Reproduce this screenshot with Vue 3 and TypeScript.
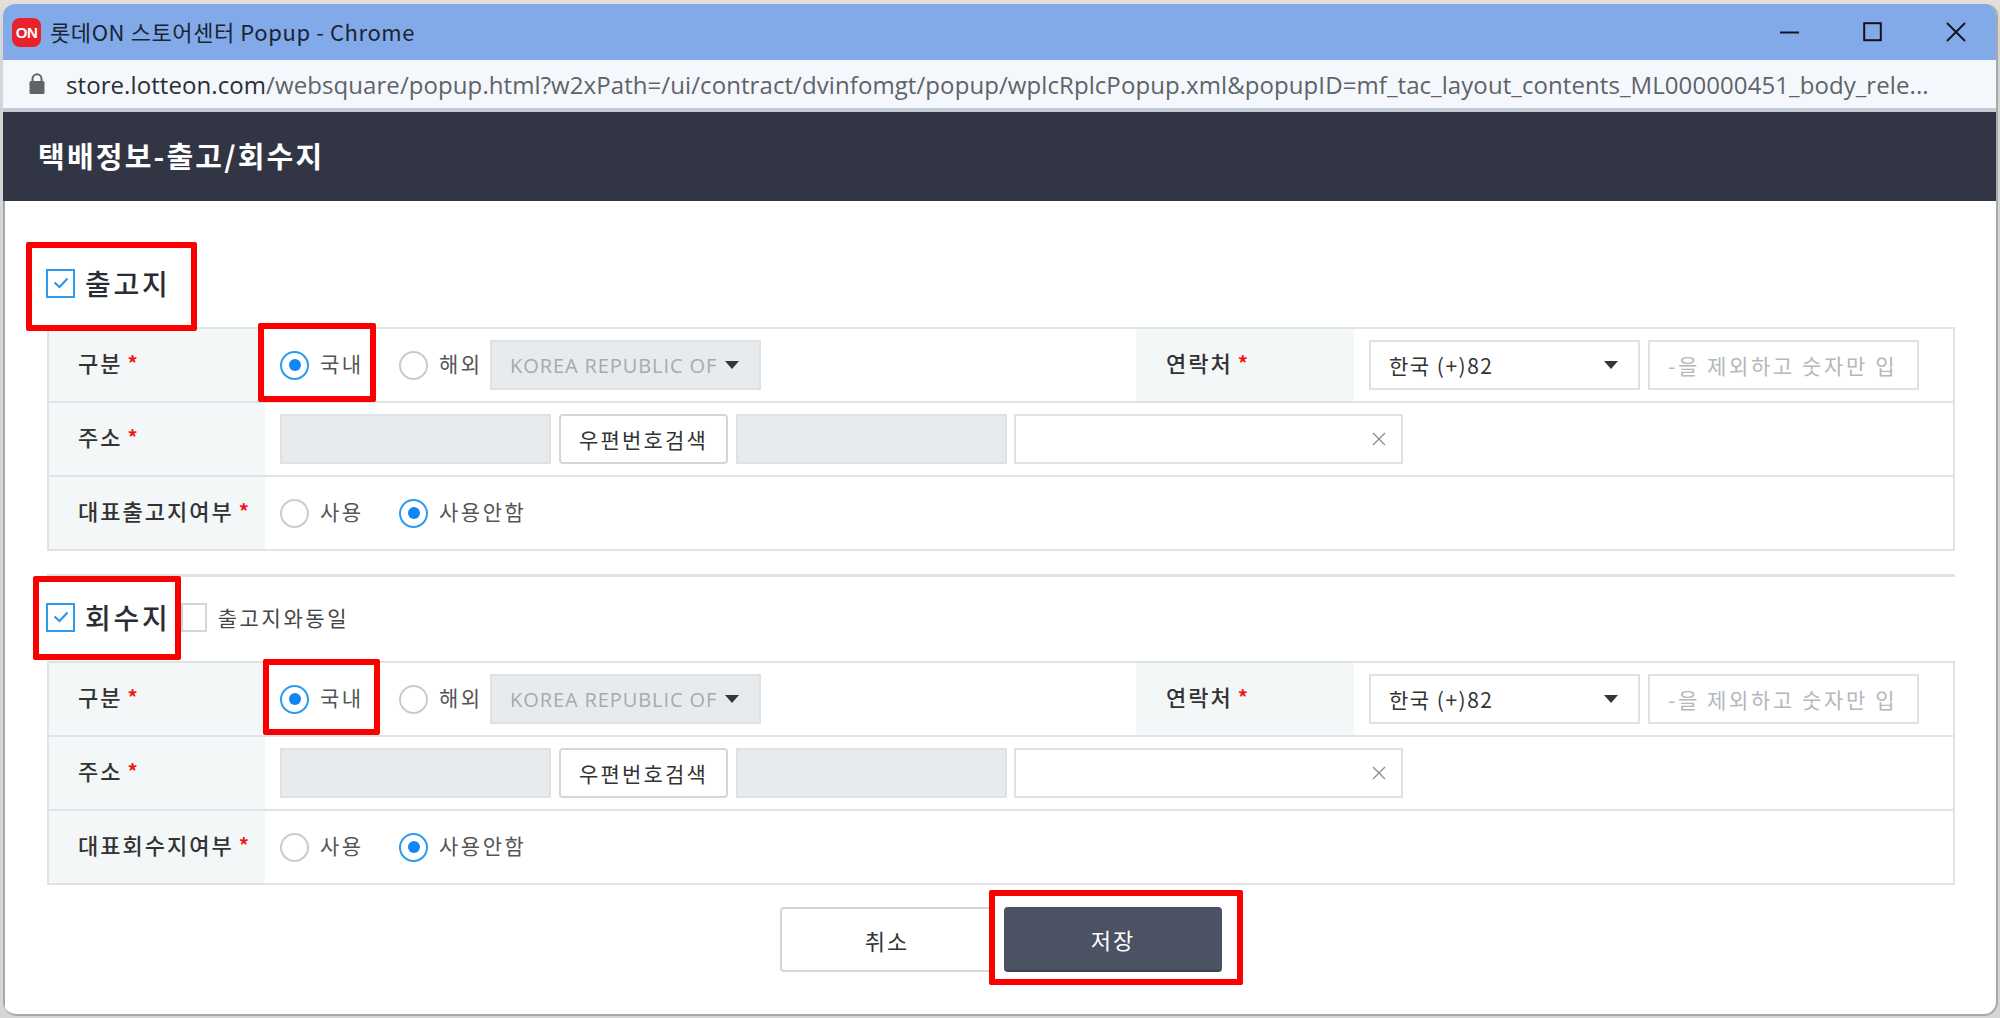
<script setup lang="ts">
interface Section {
  key: string
  title: string
  rep: string
  extra: boolean
}

const sections: Section[] = [
  { key: 'out', title: '출고지', rep: '대표출고지여부', extra: false },
  { key: 'ret', title: '회수지', rep: '대표회수지여부', extra: true },
]

const marks = [
  { key: 'a', cls: 'mark-a' },
  { key: 'b', cls: 'mark-b' },
  { key: 'c', cls: 'mark-c' },
  { key: 'd', cls: 'mark-d' },
  { key: 'e', cls: 'mark-e' },
]
</script>

<template>
  <div class="page">
    <div class="window">
      <div class="titlebar">
        <span class="favicon">ON</span>
        <span class="win-title">롯데ON 스토어센터 Popup - Chrome</span>
        <div class="controls">
          <svg width="20" height="20" viewBox="0 0 20 20"><path d="M0 10.5h19" stroke="#10131a" stroke-width="2" /></svg>
          <svg width="20" height="20" viewBox="0 0 20 20"><rect x="1.2" y="1.2" width="16.6" height="17" fill="none" stroke="#10131a" stroke-width="2" /></svg>
          <svg width="20" height="20" viewBox="0 0 20 20"><path d="M1 1l18 18M19 1L1 19" stroke="#10131a" stroke-width="1.8" fill="none" /></svg>
        </div>
      </div>
      <div class="addressbar">
        <svg class="lock" width="16" height="21" viewBox="0 0 16 21">
          <path d="M3.5 9V5.8a4.5 4.5 0 0 1 9 0V9" fill="none" stroke="#5f6368" stroke-width="2" />
          <rect x="0.5" y="8" width="15" height="13" rx="1.5" fill="#5f6368" />
        </svg>
        <span class="url"><span class="host">store.lotteon.com</span>/websquare/popup.html?w2xPath=/ui/contract/dvinfomgt/popup/wplcRplcPopup.xml&amp;popupID=mf_tac_layout_contents_ML000000451_body_rele...</span>
      </div>
      <div class="header">택배정보-출고/회수지</div>

      <div class="content">
        <section v-for="s in sections" :key="s.key" class="section" :class="'section-' + s.key">
          <div class="sec-title">
            <span class="check on">
              <svg width="16" height="12" viewBox="0 0 16 12"><path d="M1.5 5.5l5 4.5 8-8.5" fill="none" stroke="#2196f3" stroke-width="2" /></svg>
            </span>
            <h2>{{ s.title }}</h2>
            <template v-if="s.extra">
              <span class="check plain"></span>
              <span class="same">출고지와동일</span>
            </template>
          </div>

          <div class="table">
            <div class="row">
              <div class="label">구분 <em>*</em></div>
              <div class="cell cell-main">
                <span class="radio on"></span><span class="opt">국내</span>
                <span class="radio"></span><span class="opt tight">해외</span>
                <div class="field select disabled">
                  <span class="korea">KOREA REPUBLIC OF</span>
                  <i class="caret"></i>
                </div>
              </div>
              <div class="label label-contact">연락처 <em>*</em></div>
              <div class="cell">
                <div class="field select">
                  <span class="phone">한국 (+)82</span>
                  <i class="caret"></i>
                </div>
                <div class="field placeholder">-을 제외하고 숫자만 입</div>
              </div>
            </div>
            <div class="row">
              <div class="label">주소 <em>*</em></div>
              <div class="cell">
                <div class="field disabled"></div>
                <button class="zip" type="button">우편번호검색</button>
                <div class="field disabled"></div>
                <div class="field detail">
                  <svg width="14" height="14" viewBox="0 0 14 14"><path d="M1 1l12 12M13 1L1 13" stroke="#8c8f93" stroke-width="1.4" fill="none" /></svg>
                </div>
              </div>
            </div>
            <div class="row">
              <div class="label">{{ s.rep }} <em>*</em></div>
              <div class="cell">
                <span class="radio"></span><span class="opt">사용</span>
                <span class="radio on"></span><span class="opt">사용안함</span>
              </div>
            </div>
          </div>
        </section>

        <div class="actions">
          <button class="btn cancel" type="button">취소</button>
          <button class="btn save" type="button">저장</button>
        </div>
      </div>
    </div>

    <span v-for="m in marks" :key="m.key" class="mark" :class="m.cls"></span>
  </div>
</template>

<style>
html,
body {
  margin: 0;
  background: #dcdad7;
}
</style>

<style scoped>
.page {
  position: relative;
  width: 2000px;
  height: 1018px;
  padding: 4px 2px 2px 3px;
  box-sizing: border-box;
  background: linear-gradient(#e6e0d6 0, #d5d5d5 30px);
  overflow: hidden;
  font-family: "Noto Sans CJK KR", "Noto Sans", sans-serif;
  color: #333;
}
.window {
  height: 100%;
  display: flex;
  flex-direction: column;
  border-radius: 12px 12px 14px 14px;
  overflow: hidden;
  background: #fff;
  border-right: 2px solid #a8a8a8;
  border-bottom: 2px solid #a8a8a8;
  box-sizing: border-box;
}
.titlebar {
  height: 56px;
  flex: none;
  display: flex;
  align-items: center;
  background: #82aae8;
  padding-left: 9px;
}
.favicon {
  width: 29px;
  height: 29px;
  border-radius: 8px;
  background: #e8212b;
  color: #fff;
  font: 700 15px/29px "Liberation Sans", sans-serif;
  letter-spacing: -0.5px;
  text-align: center;
}
.win-title {
  margin-left: 9px;
  margin-top: -2px;
  font-size: 22px;
  color: #1b2433;
  white-space: nowrap;
  letter-spacing: 0.6px;
}
.controls {
  margin-left: auto;
  margin-right: 30px;
  display: flex;
  gap: 63px;
}
.addressbar {
  flex: none;
  display: flex;
  align-items: center;
  background: #f4f8fd;
  padding-left: 26px;
  border-bottom: 4px solid #c3cbd6;
  box-sizing: content-box;
  height: 48px;
}
.lock {
  flex: none;
  margin-top: -1px;
}
.url {
  margin-left: 21px;
  font-family: "Open Sans", sans-serif;
  font-size: 24px;
  color: #5f6368;
  white-space: nowrap;
  letter-spacing: 0.08px;
}
.host {
  color: #2b2e33;
}
.header {
  flex: none;
  height: 89px;
  box-sizing: border-box;
  padding-bottom: 3px;
  display: flex;
  align-items: center;
  padding-left: 35px;
  background: #323644;
  color: #fff;
  font-size: 29px;
  font-weight: 700;
  letter-spacing: 2.2px;
}
.content {
  flex: 1;
  border-left: 2px solid #a8a8a8;
  padding: 0 41px 0 42px;
}
.section-out .sec-title {
  padding-top: 67px;
  padding-bottom: 29px;
}
.section-ret {
  margin-top: 23px;
  border-top: 3px solid #dfe2e5;
}
.section-ret .sec-title {
  padding-top: 25px;
  padding-bottom: 29px;
}
.sec-title {
  display: flex;
  align-items: center;
  height: 30px;
  box-sizing: content-box;
}
.sec-title h2 {
  margin: 0 0 0 10px;
  font-size: 28px;
  font-weight: 500;
  line-height: 30px;
  color: #2a2d33;
  letter-spacing: 2.8px;
}
.check {
  width: 29px;
  height: 29px;
  box-sizing: border-box;
  display: flex;
  align-items: center;
  justify-content: center;
  flex: none;
}
.check.on {
  border: 2px solid #2b9bf0;
  margin-left: -1px;
}
.check.plain {
  border: 2px solid #d4d7da;
  width: 26px;
  margin-left: 10px;
}
.same {
  margin-left: 11px;
  font-size: 21px;
  color: #444;
  letter-spacing: 2.6px;
}
.table {
  border: 2px solid #dfe3e6;
}
.row {
  display: flex;
  height: 72px;
  border-bottom: 2px solid #dfe3e6;
}
.row:last-child {
  border-bottom: 0;
}
.label {
  flex: none;
  width: 216px;
  box-sizing: border-box;
  padding-left: 29px;
  padding-bottom: 6px;
  display: flex;
  align-items: center;
  gap: 5px;
  background: #f4f7f8;
  font-size: 22px;
  font-weight: 500;
  letter-spacing: 2px;
  white-space: nowrap;
  color: #333;
}
.label em {
  color: #f01414;
  font-style: normal;
  font-weight: 700;
  font-size: 20px;
}
.label-contact {
  width: 218px;
  padding-left: 30px;
}
.cell {
  display: flex;
  align-items: center;
  padding-left: 15px;
}
.cell-main {
  width: 871px;
  box-sizing: border-box;
  flex: none;
}
.radio {
  width: 29px;
  height: 29px;
  flex: none;
  box-sizing: border-box;
  border: 2px solid #c4cdd4;
  border-radius: 50%;
  background: #fff;
  display: flex;
  align-items: center;
  justify-content: center;
}
.radio.on {
  border-color: #2b9bf0;
}
.radio.on::after {
  content: "";
  width: 12px;
  height: 12px;
  border-radius: 50%;
  background: #0f86f5;
}
.opt {
  margin-left: 11px;
  margin-right: 35.4px;
  margin-top: -5px;
  font-size: 21px;
  color: #555;
  letter-spacing: 2.5px;
  white-space: nowrap;
}
.opt.tight {
  margin-right: 7.4px;
}
.field {
  width: 271px;
  height: 50px;
  box-sizing: border-box;
  border: 2px solid #dfe2e5;
  background: #fff;
  flex: none;
  display: flex;
  align-items: center;
  white-space: nowrap;
  overflow: hidden;
}
.field + .field {
  margin-left: 8px;
}
.field.disabled {
  background: #e8ebee;
}
.select {
  justify-content: space-between;
  padding: 0 20px 0 18px;
}
.korea {
  font-family: "Open Sans", sans-serif;
  font-size: 20px;
  color: #a5aaaf;
  letter-spacing: 0.9px;
}
.phone {
  font-size: 21px;
  color: #333;
  letter-spacing: 1.5px;
}
.caret {
  width: 0;
  height: 0;
  border-left: 7px solid transparent;
  border-right: 7px solid transparent;
  border-top: 8px solid #33363c;
  flex: none;
}
.placeholder {
  padding-left: 18px;
  font-size: 21px;
  color: #b4b8bc;
  letter-spacing: 2.6px;
}
.zip {
  margin: 0 8px;
  width: 169px;
  height: 50px;
  flex: none;
  padding: 0;
  box-sizing: border-box;
  border: 2px solid #d4d7da;
  border-radius: 4px;
  background: #fff;
  font-family: inherit;
  font-size: 21px;
  color: #333;
  letter-spacing: 2.2px;
}
.field.detail {
  width: 389px;
  margin-left: 7px;
  justify-content: flex-end;
  padding-right: 15px;
}
.actions {
  display: flex;
  justify-content: flex-start;
  gap: 10px;
  margin-top: 22px;
  padding-left: 733px;
}
.btn {
  height: 65px;
  padding: 0;
  box-sizing: border-box;
  border-radius: 4px;
  font-family: inherit;
  font-size: 22px;
  letter-spacing: 2px;
}
.cancel {
  width: 214px;
  border: 2px solid #d4d7da;
  background: #fff;
  color: #333;
}
.save {
  width: 218px;
  border: 0;
  border-bottom: 2px solid #3a4150;
  background: #4a5263;
  color: #fff;
}
.mark {
  position: absolute;
  box-sizing: border-box;
  border: 6px solid #fb0000;
  border-radius: 2px;
  pointer-events: none;
}
.mark-a { left: 26px; top: 242px; width: 171px; height: 89px; }
.mark-b { left: 258px; top: 323px; width: 118px; height: 79px; }
.mark-c { left: 33px; top: 576px; width: 148px; height: 84px; }
.mark-d { left: 263px; top: 659px; width: 117px; height: 76px; }
.mark-e { left: 989px; top: 890px; width: 254px; height: 95px; }
</style>
